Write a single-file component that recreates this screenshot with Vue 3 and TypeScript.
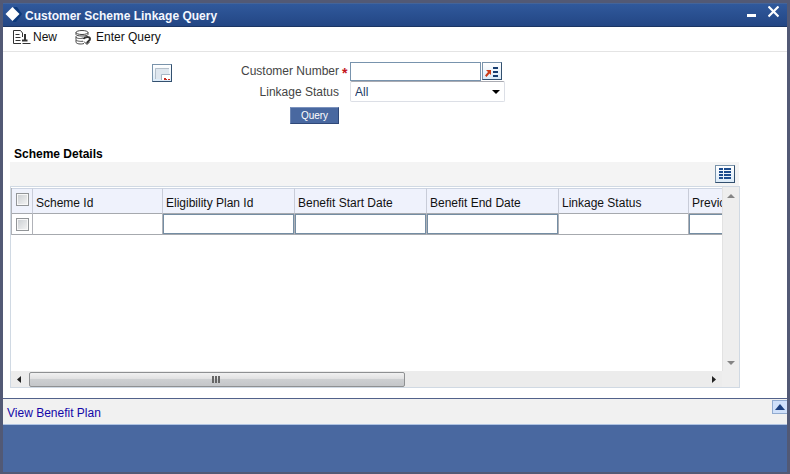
<script setup lang="ts">
import { ref } from 'vue'

interface Column {
  key: string
  label: string
  width: number
  editable: boolean
}

const columns: Column[] = [
  { key: 'schemeId', label: 'Scheme Id', width: 130, editable: false },
  { key: 'planId', label: 'Eligibility Plan Id', width: 132, editable: true },
  { key: 'startDate', label: 'Benefit Start Date', width: 132, editable: true },
  { key: 'endDate', label: 'Benefit End Date', width: 132, editable: true },
  { key: 'status', label: 'Linkage Status', width: 130, editable: false },
  { key: 'previous', label: 'Previous', width: 132, editable: true },
]

const customerNumber = ref('')
const linkageStatus = ref('All')
</script>

<template>
  <div class="window">
    <header class="title-bar">
      <svg class="logo" width="17" height="17" viewBox="0 0 17 17" aria-hidden="true">
        <path d="M9 0h3l5 7-6 8H8z" fill="#0d3a7c" />
        <path d="M7.500 0 14.500 7 7.500 14 .500 7z" fill="#fff" />
      </svg>
      <h1>Customer Scheme Linkage Query</h1>
      <button class="win-btn" type="button" aria-label="Minimize">
        <svg width="9" height="12" viewBox="0 0 9 12"><path d="M0 8h9v3H0z" fill="#fff" /></svg>
      </button>
      <button class="win-btn" type="button" aria-label="Close">
        <svg width="11" height="12" viewBox="0 0 11 12">
          <path d="M.500.500 10.500 10.500M10.500.500.500 10.500" stroke="#fff" stroke-width="2.200" />
        </svg>
      </button>
    </header>

    <nav class="toolbar">
      <button type="button" class="tool">
        <svg width="18" height="15" viewBox="0 0 18 15" fill="none" stroke="#333" aria-hidden="true">
          <path d="M8 13.500H.500V.500H7.500L9.500 3V7" />
          <path d="M2.500 4.500h4M2.500 7.500h5M2.500 10.500h5" />
          <path d="M12 4v7M9 10.500h5.500" stroke-width="2" />
          <path d="M9.500 13.500h8" />
        </svg>
        New
      </button>
      <button type="button" class="tool enter-query">
        <svg width="17" height="15" viewBox="0 0 17 15" fill="none" stroke="#444" aria-hidden="true">
          <ellipse cx="7" cy="2.500" rx="6" ry="2" />
          <path d="M1 2.500v2c0 2 12 2 12 0v-2M1 6.500c0 2 4 2.500 7 1.500M1 6.500v3c0 1.500 4 2.200 7 1.700M1 10v2c0 2 5 2.500 8 1.500" />
          <path d="M8.500 9c1-2.500 6.500-3 6.500 0 0 2-3 2-3 4.500" stroke="#333" stroke-width="2" />
          <path d="M9 11.500 12 14.500 14.500 12" stroke="#333" />
        </svg>
        Enter Query
      </button>
    </nav>

    <main>
      <form class="query-form" @submit.prevent>
        <button type="button" class="icon-btn panel-btn" aria-label="Open panel">
          <svg width="18" height="16" viewBox="0 0 18 16" aria-hidden="true">
            <path d="M2 3h14v11H2z" fill="#dfe7ef" />
            <path d="M2.500 14V3.500H16" fill="none" stroke="#b4bfca" />
            <path d="M9 9h8v6H9z" fill="#fff" />
            <path d="M8.500 15V9.500H17" fill="none" stroke="#a6b5c5" />
            <path d="M11 13h2v1h1v1h-3zM15 14h2v1h-2z" fill="#c62b22" />
          </svg>
        </button>
        <label for="customer-number" class="label">Customer Number</label>
        <span class="required">*</span>
        <div class="lookup">
          <input id="customer-number" v-model="customerNumber" type="text" />
          <button type="button" class="icon-btn" aria-label="Find customer">
            <svg width="18" height="16" viewBox="0 0 18 16" aria-hidden="true">
              <path d="M10 4h5v2h-5zM10 8h5v2h-5zM10 12h5v2h-5z" fill="#183d70" />
              <path d="M3 7h5v5L6.500 10.500 3.500 14 2 12.500 5 9z" fill="#cb3c18" />
            </svg>
          </button>
        </div>
        <label for="linkage-status" class="label status-label">Linkage Status</label>
        <div class="select">
          <select id="linkage-status" v-model="linkageStatus">
            <option>All</option>
          </select>
          <svg class="caret" width="8" height="4" viewBox="0 0 8 4" aria-hidden="true"><path d="M0 0h8L4 4z" /></svg>
        </div>
        <button type="submit" class="query-btn">Query</button>
      </form>

      <section class="details">
        <h2>Scheme Details</h2>
        <div class="grid-bar">
          <button type="button" class="icon-btn" aria-label="Single record view">
            <svg width="18" height="16" viewBox="0 0 18 16" fill="#1d4c8e" aria-hidden="true">
              <path d="M3 2h4v2H3zM8 2h7v2H8zM3 5h4v2H3zM8 5h7v2H8zM3 8h4v2H3zM8 8h7v2H8zM3 11h4v2H3zM8 11h7v2H8z" />
            </svg>
          </button>
        </div>
        <div class="grid-box">
          <div class="viewport">
            <table>
              <colgroup>
                <col class="check-col" />
                <col v-for="c in columns" :key="c.key" :style="{ width: c.width + 'px' }" />
              </colgroup>
              <thead>
                <tr>
                  <th class="check"><input type="checkbox" aria-label="Select all rows" /></th>
                  <th v-for="c in columns" :key="c.key" scope="col">{{ c.label }}</th>
                </tr>
              </thead>
              <tbody>
                <tr>
                  <td class="check"><input type="checkbox" aria-label="Select row" /></td>
                  <td v-for="c in columns" :key="c.key">
                    <input v-if="c.editable" type="text" class="cell" :aria-label="c.label" />
                  </td>
                </tr>
              </tbody>
            </table>
          </div>
          <div class="v-scroll">
            <button type="button" aria-label="Scroll up">
              <svg width="8" height="4" viewBox="0 0 8 4" fill="#858585"><path d="M4 0 8 4H0z" /></svg>
            </button>
            <button type="button" aria-label="Scroll down">
              <svg width="8" height="4" viewBox="0 0 8 4" fill="#858585"><path d="M0 0h8L4 4z" /></svg>
            </button>
          </div>
          <div class="h-scroll">
            <button type="button" aria-label="Scroll left">
              <svg width="4" height="7" viewBox="0 0 4 7" fill="#222"><path d="M4 0v7L0 3.500z" /></svg>
            </button>
            <div class="track">
              <div class="thumb">
                <svg width="9" height="7" viewBox="0 0 9 7" fill="#666"><path d="M0 0h2v7H0zM3 0h2v7H3zM6 0h2v7H6z" /></svg>
              </div>
            </div>
            <button type="button" aria-label="Scroll right">
              <svg width="4" height="7" viewBox="0 0 4 7" fill="#222"><path d="M0 0v7l4-3.500z" /></svg>
            </button>
          </div>
          <div class="corner"></div>
        </div>
      </section>
    </main>

    <footer>
      <div class="links">
        <a href="#">View Benefit Plan</a>
        <button type="button" class="expand" aria-label="Expand">
          <svg width="10" height="6" viewBox="0 0 10 6" fill="#1c4080"><path d="M5 0l5 6H0z" /></svg>
        </button>
      </div>
      <div class="status-bar"></div>
    </footer>
  </div>
</template>

<style>
body {
  margin: 0;
}
</style>

<style scoped>
.window,
.window * {
  box-sizing: border-box;
}
.window {
  display: flex;
  flex-direction: column;
  min-height: 100vh;
  border: 3px solid #525975;
  background: #fff;
  color: #111;
  font-family: "Liberation Sans", Arial, sans-serif;
  font-size: 12px;
  line-height: 16px;
}
button {
  margin: 0;
  padding: 0;
  border: 0;
  background: none;
  color: inherit;
  font: inherit;
}
input,
select {
  margin: 0;
  font: inherit;
}
svg {
  display: block;
}
h1,
h2 {
  margin: 0;
  font-size: 12px;
  font-weight: bold;
}
.title-bar {
  display: flex;
  align-items: center;
  height: 24px;
  padding: 0 8px 0 2px;
  border-top: 1px solid #43649a;
  border-bottom: 1px solid #1b3563;
  background: linear-gradient(#30599c, #234684);
  color: #f4f7ff;
}
.title-bar h1 {
  flex: 1;
  padding: 1px 0 0 3px;
}
.win-btn {
  margin-left: 12px;
  padding-bottom: 6px;
}
.toolbar {
  display: flex;
  align-items: center;
  gap: 18px;
  height: 25px;
  padding: 0 10px 5px;
  border-bottom: 1px solid #e4e4e4;
}
.tool {
  display: flex;
  align-items: center;
  gap: 2px;
}
.enter-query {
  gap: 4px;
}
.tool svg {
  margin-top: 1px;
}
main {
  flex: 1;
  padding: 9px 47px 10px 7px;
}
.query-form {
  display: grid;
  grid-template-columns: 142px 187px 11px 155px;
  grid-template-rows: 20px 21px 22px;
  align-items: center;
}
.icon-btn {
  flex: none;
  width: 20px;
  height: 18px;
  border: 1px solid #33506f;
  border-top-color: #7993ab;
  border-left-color: #7993ab;
  background: linear-gradient(#fff, #dcebf8);
}
.panel-btn {
  grid-row: 1;
  justify-self: start;
  margin-left: 142px;
  margin-top: 4px;
}
.label {
  grid-column: 2;
  grid-row: 1;
  justify-self: end;
  color: #444;
}
.status-label {
  grid-row: 2;
}
.required {
  grid-column: 3;
  grid-row: 1;
  padding: 4px 0 0 3px;
  color: #c4161c;
  font-size: 14px;
  font-weight: bold;
}
.lookup {
  display: flex;
  grid-column: 4;
  grid-row: 1;
  gap: 1px;
}
.lookup input {
  width: 131px;
  height: 19px;
  border: 1px solid #7893ad;
  background: #fff;
}
.select {
  display: grid;
  grid-column: 4;
  grid-row: 2;
  align-items: center;
}
.select > * {
  grid-area: 1 / 1;
}
.select select {
  height: 21px;
  padding: 0 4px;
  appearance: none;
  border: 1px solid #dcdfe6;
  border-top-color: #aaabb2;
  border-radius: 2px;
  background: #fff;
  color: #1d3b66;
}
.caret {
  justify-self: end;
  margin-right: 5px;
  pointer-events: none;
}
.query-btn {
  grid-column: 2;
  grid-row: 3;
  align-self: end;
  justify-self: end;
  width: 49px;
  height: 17px;
  border: 1px solid #2f4878;
  border-top-color: #7b92bd;
  border-left-color: #6d86b3;
  background: #4968a0;
  color: #fff;
  font-size: 10px;
  line-height: 15px;
}
.details {
  padding-top: 22px;
}
h2 {
  padding-left: 4px;
  color: #000;
}
.grid-bar {
  display: flex;
  justify-content: flex-end;
  height: 24px;
  margin: 0 1px 0 0;
  padding: 3px 4px 0;
  background: #f4f4f4;
}
.grid-box {
  display: grid;
  grid-template-columns: minmax(0, 1fr) 17px;
  grid-template-rows: 184px 16px;
  border: 1px solid #d0d9e3;
}
.viewport {
  overflow: hidden;
  padding-top: 1px;
}
table {
  width: 810px;
  table-layout: fixed;
  border-collapse: separate;
  border-spacing: 0;
  border-left: 1px solid #b0b2b8;
}
.check-col {
  width: 21px;
}
th,
td {
  padding: 0;
  border-right: 1px solid #b0b2b8;
  border-bottom: 1px solid #a6a9ae;
  text-align: left;
}
th {
  height: 26px;
  padding: 4px 3px 0;
  border-top: 1px solid #ccd4e2;
  border-right-color: #c8ccd8;
  background: #eff2fc;
  font-weight: normal;
}
td {
  height: 21px;
}
.check {
  padding: 0 4px;
  vertical-align: middle;
}
th.check {
  padding-bottom: 3px;
}
.check input {
  display: block;
  width: 13px;
  height: 13px;
  appearance: none;
  border: 1px solid #929598;
  outline: 1px solid #f8f8f8;
  outline-offset: -2px;
  background: linear-gradient(135deg, #c9cdd1, #f5f5f5);
}
.cell {
  display: block;
  width: 100%;
  height: 20px;
  border: 1px solid #748da3;
  background: #fff;
}
.v-scroll {
  display: flex;
  flex-direction: column;
  justify-content: space-between;
  align-items: center;
  padding: 7px 0 6px;
  border-left: 1px solid #e2e2e2;
  background: #eee;
}
.h-scroll {
  display: flex;
  align-items: center;
  padding: 0 6px;
  background: #ececec;
}
.track {
  flex: 1;
  margin-left: 8px;
}
.thumb {
  display: grid;
  place-items: center;
  width: 55%;
  height: 15px;
  border: 1px solid #8e9092;
  border-radius: 2px;
  background: linear-gradient(#f1f1f1 0%, #e1e1e2 45%, #cdcfd1 50%, #c4c6c9 100%);
}
.corner {
  background: #eee;
}
.links {
  display: flex;
  justify-content: space-between;
  height: 27px;
  padding: 1px 0 0 4px;
  border-top: 1px solid #52618a;
  border-bottom: 1px solid #afc3e2;
  background: #f1f1f1;
}
.links a {
  padding-top: 5px;
  color: #1408a8;
  text-decoration: none;
}
.expand {
  display: grid;
  place-items: center;
  width: 15px;
  height: 14px;
  border: 1px solid #91abd0;
  border-right: 0;
  background: #cfe0fa;
}
.status-bar {
  height: 47px;
  background: #4968a0;
}
</style>
